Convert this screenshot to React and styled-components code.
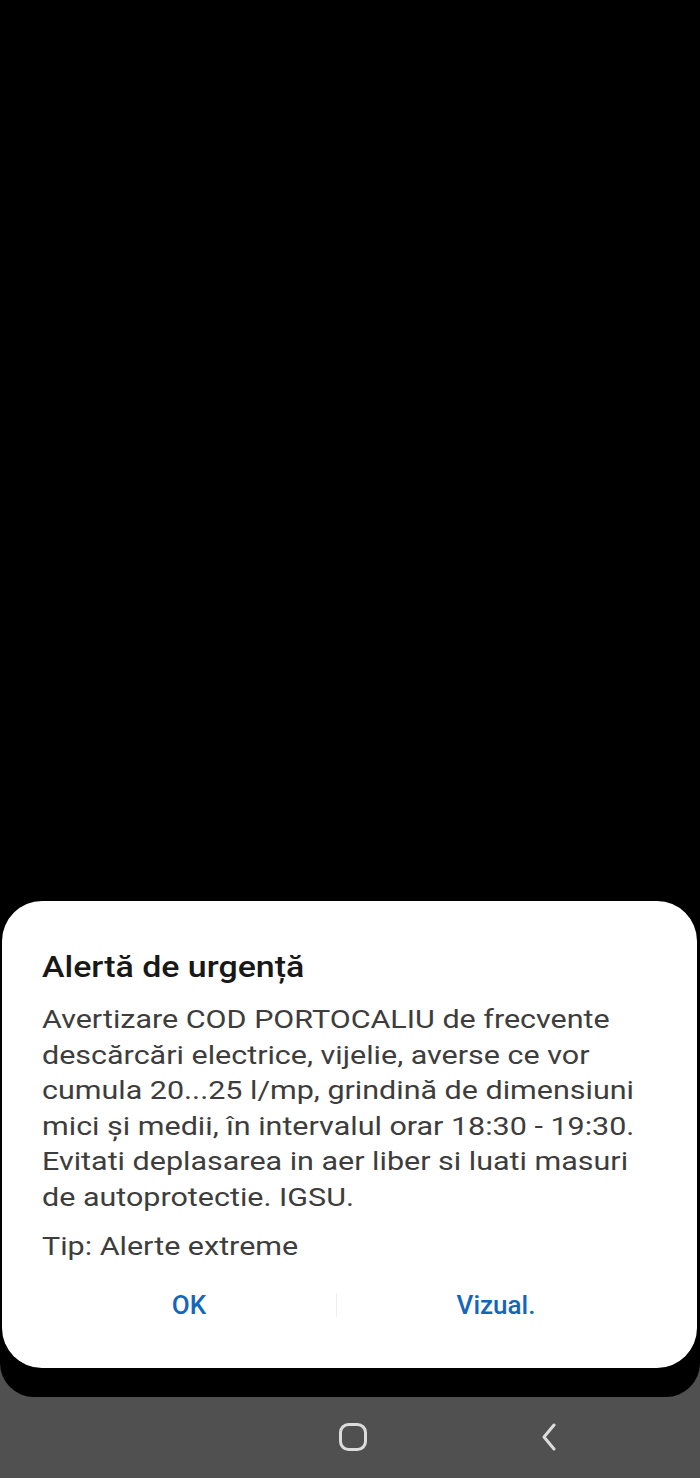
import React from "react";
import styled, { createGlobalStyle } from "styled-components";

const GlobalStyle = createGlobalStyle`
  html, body {
    margin: 0;
    padding: 0;
    background: #000;
  }
  * {
    box-sizing: border-box;
  }
`;

const Screen = styled.div`
  display: flex;
  flex-direction: column;
  width: 700px;
  height: 1478px;
  overflow: hidden;
  background: #505050;
  font-family: Roboto, "Noto Sans", sans-serif;
`;

const Sheet = styled.div`
  flex: 1;
  display: flex;
  flex-direction: column;
  justify-content: flex-end;
  background: #000;
  border-bottom-left-radius: 34px;
  border-bottom-right-radius: 34px;
  padding: 0 3px 29px 2px;
`;

const Card = styled.div`
  background: #fff;
  border-radius: 40px;
  padding: 48px 40px 0 40px;
  height: 467px;
  display: flex;
  flex-direction: column;
`;

// the device font is wider than Roboto, so the text is stretched a little
const Wide = styled.div`
  width: 86%;
  transform: scaleX(1.15);
  transform-origin: left top;
  white-space: nowrap;
`;

const Title = styled(Wide)`
  font-size: 29.5px;
  font-weight: 500;
  color: #181818;
  line-height: 36px;
`;

const Message = styled(Wide)`
  margin-top: 16px;
  font-size: 26.5px;
  line-height: 35.6px;
  color: #3d3d3d;
`;

const TypeLine = styled(Wide)`
  margin-top: 13px;
  font-size: 26.5px;
  line-height: 36px;
  color: #3d3d3d;
`;

const Actions = styled.div`
  display: flex;
  align-items: center;
  margin-top: 17px;
  height: 48px;
`;

const ActionButton = styled.button`
  width: ${({ $width }) => $width}px;
  background: none;
  border: none;
  font-family: inherit;
  font-size: 26px;
  font-weight: 500;
  color: #1467b8;
  padding: 0;
  text-align: center;
`;

const Divider = styled.span`
  width: 1px;
  height: 24px;
  background: #efefef;
`;

const NavBar = styled.div`
  height: 81px;
  display: flex;
  align-items: center;
  justify-content: center;
  gap: 172px;
  padding-left: 196px;
  padding-bottom: 2px;
`;

const HomeIcon = () => (
  <svg width="30" height="30" viewBox="0 0 30 30">
    <rect x="2.5" y="2.5" width="25" height="25" rx="8" fill="none" stroke="#dcdcdc" strokeWidth="3" />
  </svg>
);

const BackIcon = () => (
  <svg width="18" height="28" viewBox="0 0 18 28">
    <path d="M14 2 L4 14 L14 26" fill="none" stroke="#dcdcdc" strokeWidth="3" strokeLinecap="round" strokeLinejoin="round" />
  </svg>
);

const lines = [
  "Avertizare COD PORTOCALIU de frecvente",
  "descărcări electrice, vijelie, averse ce vor",
  "cumula 20...25 l/mp, grindină de dimensiuni",
  "mici și medii, în intervalul orar 18:30 - 19:30.",
  "Evitati deplasarea in aer liber si luati masuri",
  "de autoprotectie. IGSU.",
];

const App = () => {
  return (
    <>
      <GlobalStyle />
      <Screen>
        <Sheet>
          <Card>
            <Title>Alertă de urgență</Title>
            <Message>
              {lines.map((line) => (
                <div key={line}>{line}</div>
              ))}
            </Message>
            <TypeLine>Tip: Alerte extreme</TypeLine>
            <Actions>
              <ActionButton $width={294}>OK</ActionButton>
              <Divider />
              <ActionButton $width={318}>Vizual.</ActionButton>
            </Actions>
          </Card>
        </Sheet>
        <NavBar>
          <HomeIcon />
          <BackIcon />
        </NavBar>
      </Screen>
    </>
  );
};

export default App;
